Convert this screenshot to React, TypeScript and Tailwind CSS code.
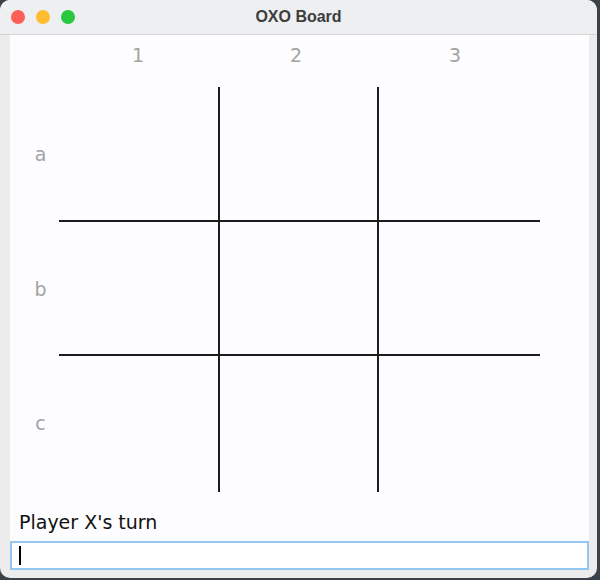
const rows = ["a", "b", "c"];
const cols = ["1", "2", "3"];

const cellBorder = (r: number, c: number) => {
  const right = c < 2 ? "border-r-2" : "";
  const bottom = r < 2 ? "border-b-2" : "";
  return `${right} ${bottom} border-[#1c1c1c]`;
};

const App = () => {
  return (
    <div className="w-[600px] h-[580px] bg-[#3b4148] font-['DejaVu_Sans',sans-serif]">
      <div className="w-[597px] h-[578px] bg-[#ececec] rounded-[10px] overflow-hidden flex flex-col">
        <div className="relative h-[35px] bg-[#eeeff0] border-b border-[#d4d4d4] flex items-center justify-center">
          <div className="absolute left-[11px] top-[10px] flex gap-[11px]">
            <span className="w-[14px] h-[14px] rounded-full bg-[#fe5f57]" />
            <span className="w-[14px] h-[14px] rounded-full bg-[#febc2e]" />
            <span className="w-[14px] h-[14px] rounded-full bg-[#28c840]" />
          </div>
          <span className="text-[16px] font-bold text-[#3d3d3d] font-['Liberation_Sans',sans-serif]">
            OXO Board
          </span>
        </div>
        <div className="flex-1 pl-[10px] pr-[8px] pb-[8px] flex">
          <div className="flex-1 bg-[#fdfcfe] flex flex-col">
            {/* column headings */}
            <div className="grid grid-cols-[49px_158px_158px_160px] h-[52px]">
              <div />
              {cols.map((c) => (
                <div key={c} className="flex justify-center pt-[7px] text-[19px] leading-[26px] text-[#a3a3a3]">
                  {c}
                </div>
              ))}
            </div>
            {/* board */}
            <div className="grid grid-cols-[49px_161px_159px_161px] grid-rows-[135px_134px_136px]">
              {rows.map((r, ri) => (
                <>
                  <div key={r} className={`flex justify-center pl-[12px] text-[19px] text-[#a3a3a3] ${ri === 2 ? "items-start pt-[53px]" : "items-center"}`}>
                    {r}
                  </div>
                  {cols.map((c, ci) => (
                    <div key={r + c} className={cellBorder(ri, ci)} />
                  ))}
                </>
              ))}
            </div>
            <div className="pl-[9px] pt-[19px] text-[19px] text-[#111] leading-[22px]">
              Player X's turn
            </div>
            <div className="mt-[8px] h-[29px] border-2 border-[#93c6f2] bg-white flex items-center pl-[7px]">
              <span className="w-[2px] h-[19px] bg-black" />
            </div>
          </div>
        </div>
      </div>
    </div>
  );
};

export default App;
